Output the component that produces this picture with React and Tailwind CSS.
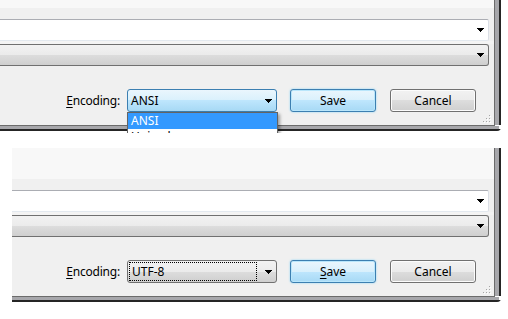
const font = { fontFamily: '"Noto Sans", "Open Sans", Arial, sans-serif' };

const Arrow = () => (
  <svg width="7" height="4" viewBox="0 0 7 4" shapeRendering="crispEdges" className="shrink-0">
    <polygon points="0,0 7,0 4,4 3,4" fill="#000" />
  </svg>
);

const Grip = () => (
  <svg width="8" height="8" viewBox="0 0 8 8" shapeRendering="crispEdges" className="absolute bottom-[2px] right-[3px]">
    {[
      [6, 0],
      [6, 3],
      [3, 3],
      [6, 6],
      [3, 6],
      [0, 6],
    ].map(([x, y]) => (
      <g key={`${x}-${y}`}>
        <rect x={x + 1} y={y + 1} width="1" height="1" fill="#ffffff" />
        <rect x={x} y={y} width="1" height="1" fill="#a6a6a6" />
      </g>
    ))}
  </svg>
);

const FrameRight = () => (
  <div className="flex w-[7px] shrink-0">
    <div className="w-px bg-[#6b6b6b]" />
    <div className="w-[4px] bg-[#a7a7ab]" />
    <div className="w-[2px] bg-[#252525]" />
  </div>
);

const FrameBottom = () => (
  <div className="flex flex-col rounded-br-[4px] overflow-hidden">
    <div className="h-px bg-[#6b6b6b] mr-[6px]" />
    <div className="h-[3px] bg-[#a7a7ab] mr-[2px]" />
    <div className="h-[2px] bg-[#252525]" />
  </div>
);

const grayFill =
  'bg-[linear-gradient(to_bottom,#f2f2f2_0%,#ebebeb_50%,#dddddd_50%,#cfcfcf_100%)]';
const blueFill =
  'bg-[linear-gradient(to_bottom,#eaf6fd_0%,#d9f0fc_50%,#bee6fd_50%,#a7d9f5_100%)]';

const EncodingCombo = ({ open }) =>
  open ? (
    <div className={`flex h-[23px] w-[150px] items-center justify-between rounded-[3px] border border-[#3c7fb1] ${blueFill} pl-[3px] pr-[4px]`}>
      <span className="text-[12px] leading-none text-black">ANSI</span>
      <Arrow />
    </div>
  ) : (
    <div className={`flex h-[23px] w-[150px] items-center justify-between rounded-[3px] border border-[#707070] ${grayFill} pl-[1px] pr-[4px]`}>
      <div className="flex h-[19px] w-[128px] items-center border border-dotted border-black pl-[2px]">
        <span className="text-[12px] leading-none text-black">UTF-8</span>
      </div>
      <Arrow />
    </div>
  );

const Buttons = ({ open }) => (
  <div className="flex gap-[14px]">
    <button
      className={`flex h-[23px] w-[86px] items-center justify-center rounded-[3px] border border-[#3c7fb1] ${blueFill} shadow-[inset_0_0_0_1px_#b9e6fb,0_0_2px_#7fd0f5] text-[12px] leading-none text-black`}
    >
      {open ? 'Save' : (
        <span>
          <span className="underline underline-offset-2">S</span>ave
        </span>
      )}
    </button>
    <button
      className={`flex h-[23px] w-[86px] items-center justify-center rounded-[3px] border border-[#707070] ${grayFill} shadow-[inset_0_0_0_1px_#fcfcfc] text-[12px] leading-none text-black`}
    >
      Cancel
    </button>
  </div>
);

const Panel = ({ open, lightHeight }) => (
  <div className="relative">
    <div className="flex">
      <div className="relative flex min-w-0 flex-1 flex-col">
        <div className="bg-[#f8f8f8]" style={{ height: lightHeight }} />
        <div className="h-[11px] bg-[#f0f0f0]" />
        <div className="flex bg-[#f0f0f0] pr-[5px]">
          <div className="flex h-[22px] flex-1 items-center justify-end rounded-r-[2px] border-t border-r border-b border-t-[#abadb3] border-r-[#dbdfe6] border-b-[#e3e9ef] bg-white pr-[4px]">
            <Arrow />
          </div>
        </div>
        <div className="h-[3px] bg-[#f4f4f4]" />
        <div className="flex bg-[#f0f0f0] pr-[5px]">
          <div className={`flex h-[22px] flex-1 items-center justify-end rounded-r-[3px] border-t border-r border-b border-[#707070] ${grayFill} pr-[4px]`}>
            <Arrow />
          </div>
        </div>
        <div className="flex h-[59px] items-start justify-end gap-[13px] bg-[#f0f0f0] pt-[23px] pr-[18px]">
          <div className="flex items-center gap-[7px]">
            <span className="text-[12px] leading-[23px] tracking-[-0.2px] text-black">
              <span className="underline underline-offset-2">E</span>ncoding:
            </span>
            <EncodingCombo open={open} />
          </div>
          <Buttons open={open} />
        </div>
        <Grip />
      </div>
      <FrameRight />
    </div>
    <FrameBottom />
  </div>
);

export default function App() {
  return (
    <div className="relative h-[319px] w-[508px] overflow-hidden bg-white" style={font}>
      <div className="relative h-[133px] overflow-hidden">
        <div className="w-[501px]">
          <Panel open lightHeight={8} />
        </div>
        <div className="absolute left-[127px] top-[112px] w-[151px] border border-[#646464] bg-white shadow-[2px_2px_3px_rgba(0,0,0,0.35)]">
          <div className="flex h-[16px] items-center bg-[#3399ff] pl-[3px] text-[12px] leading-none text-white">
            ANSI
          </div>
          <div className="flex h-[16px] items-center pl-[3px] text-[12px] leading-none text-black">
            Unicode
          </div>
        </div>
      </div>
      <div className="ml-[12px] mt-[15px] w-[489px]">
        <Panel open={false} lightHeight={31} />
      </div>
    </div>
  );
}
